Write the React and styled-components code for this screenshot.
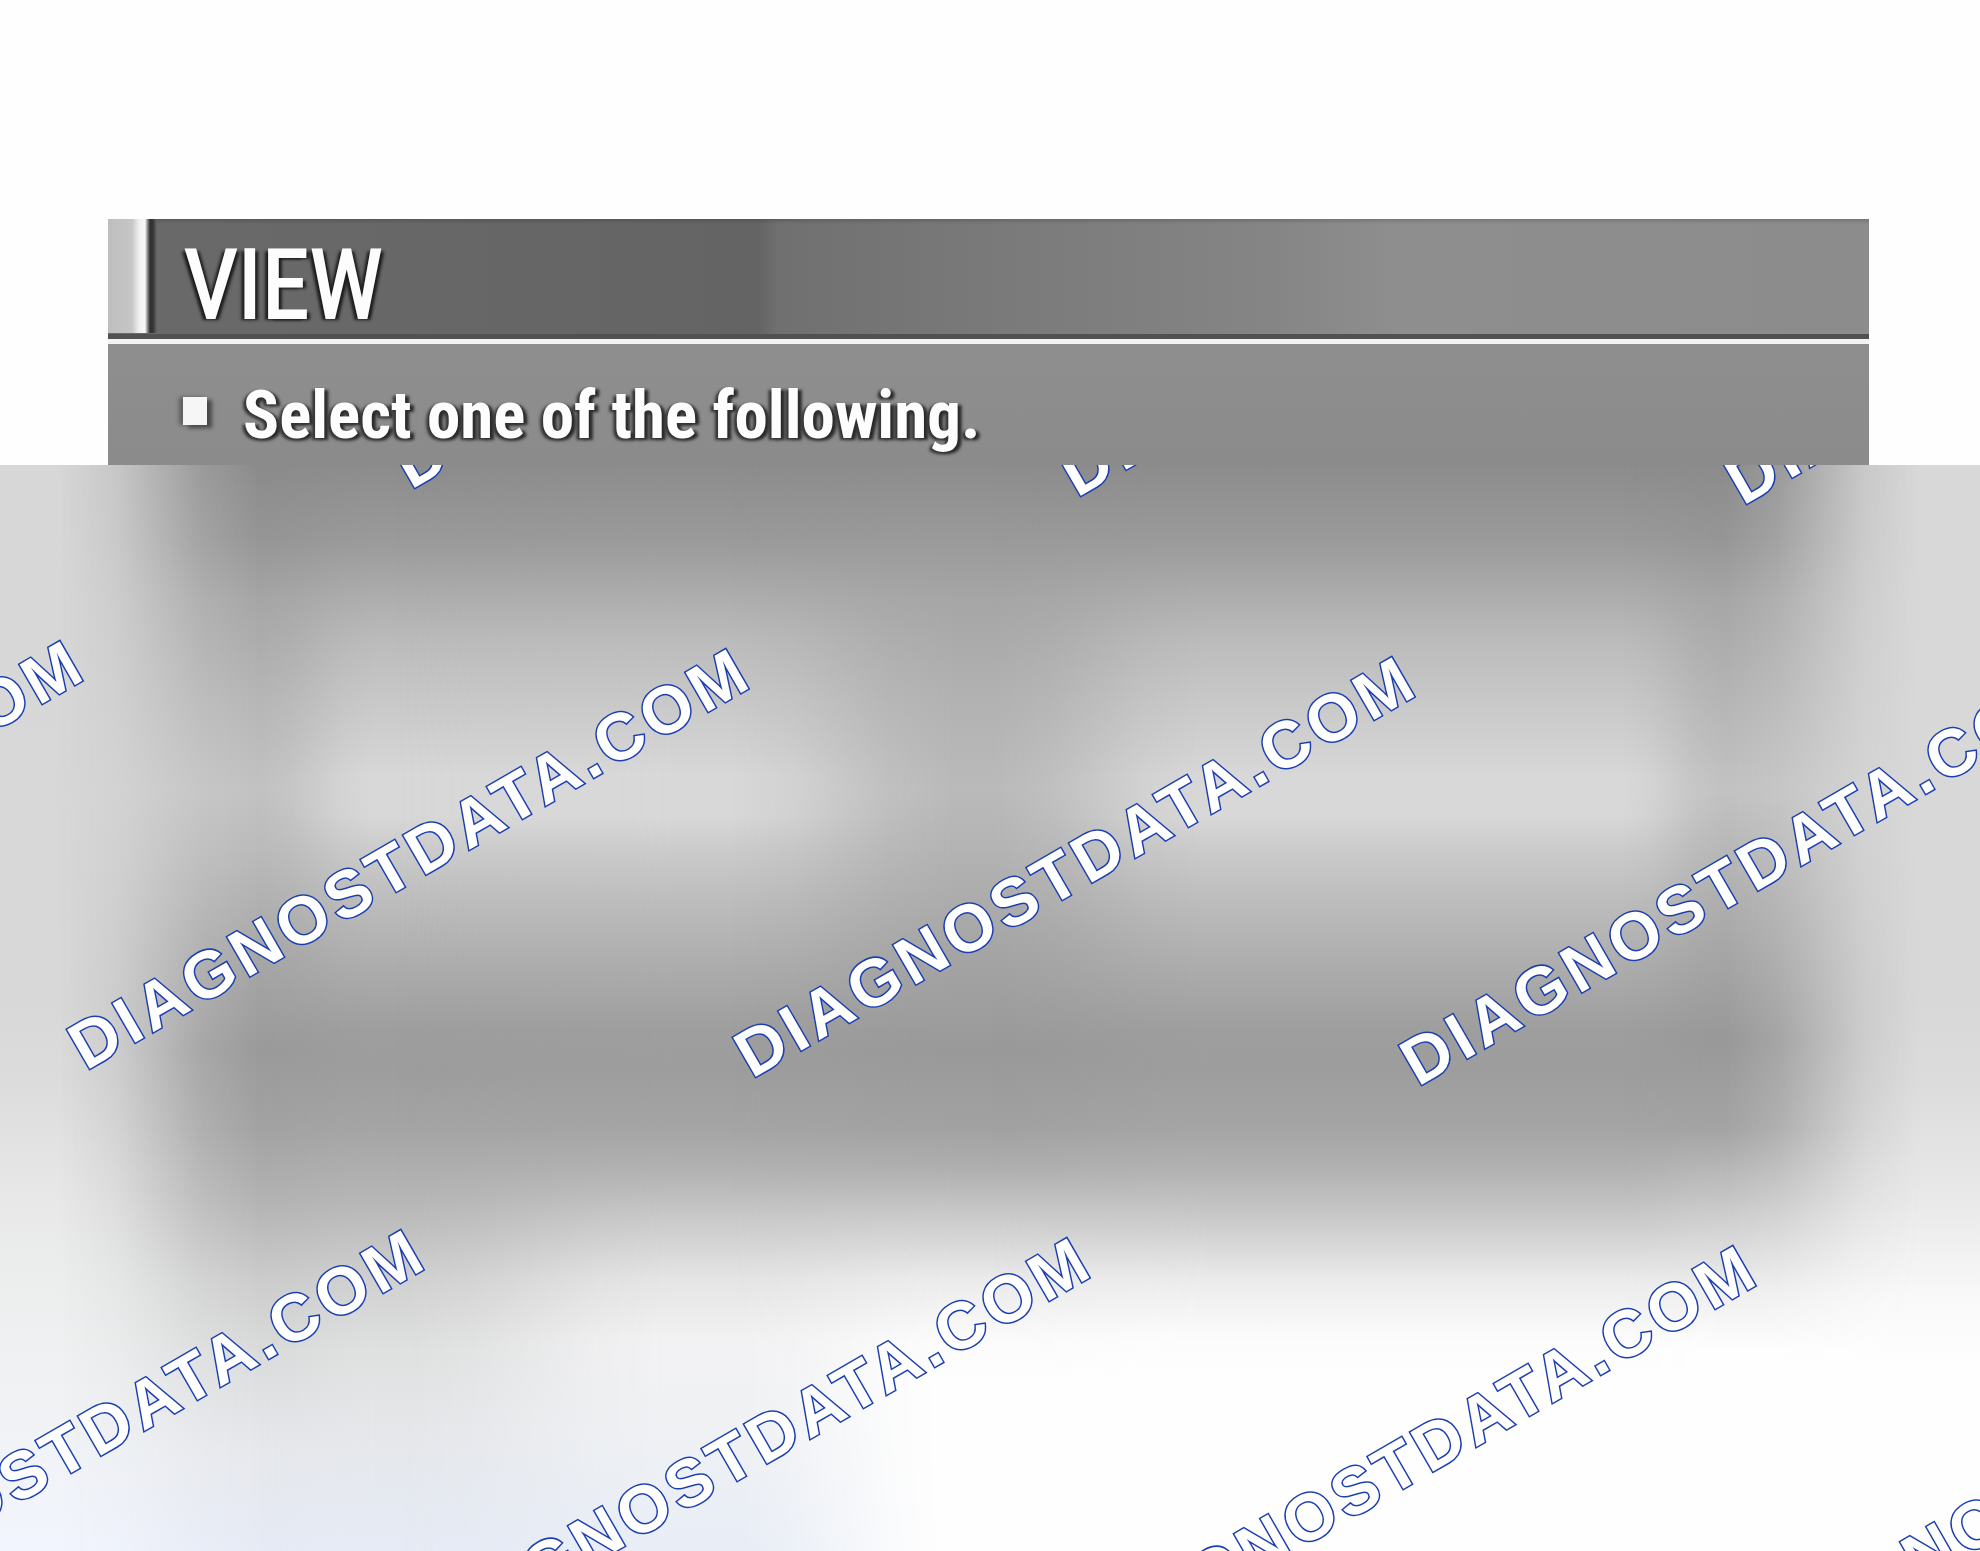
import React from "react";
import styled, { createGlobalStyle } from "styled-components";

const GlobalStyle = createGlobalStyle`
  *, *::before, *::after { box-sizing: border-box; }
  body { margin: 0; background: #fefefe; }
`;

const Page = styled.main`
  min-height: 100vh;
  display: flex;
  flex-direction: column;
  padding-top: 219px;
  overflow: hidden;
  font-family: "Roboto Condensed", Roboto, "Liberation Sans", Arial, sans-serif;
  color: #fdfdfd;
`;

const Screen = styled.section`
  margin: 0 111px 0 108px;
  background: linear-gradient(#929292, #8b8b8b);
`;

const TitleBar = styled.header`
  display: flex;
  height: 120px;
  border-bottom: 5px solid #515151;
  background:
    linear-gradient(#00000028, transparent 5px),
    linear-gradient(90deg, #6a6a6a 0, #646464 37%, #707070 38%, #7b7b7b 52%, #858585 66%, #8e8e8e 73%, #8c8c8c 100%);
`;

const Grip = styled.div`
  width: 49px;
  margin-bottom: 1px;
  background: linear-gradient(90deg, #bebebe 0, #c6c6c6 24px, #f0f0f0 31px, #f8f8f8 37px, #a0a0a0 39px, #303030 42px, #363636 45px, #686868 49px);
`;

const Title = styled.h1`
  margin: 0;
  padding: 16px 0 0 27px;
  font-size: 96px;
  line-height: 100px;
  font-weight: 400;
  -webkit-text-stroke: 2px #fdfdfd;
  text-shadow: -4px 2px 3px #1c1c1c, 4px 2px 3px #1c1c1c;
`;

const Prompt = styled.div`
  display: flex;
  align-items: flex-start;
  gap: 36px;
  height: 126px;
  padding: 35px 0 0 75px;
  border-top: 5px solid #f3f3f3;
`;

const Bullet = styled.span`
  width: 24px;
  height: 28px;
  margin-top: 18px;
  background: #f6f6f6;
  box-shadow: 5px 3px 4px #484848, -4px 0 4px #606060;
`;

const PromptText = styled.p`
  margin: 0;
  font-size: 67px;
  line-height: 72px;
  font-weight: 700;
  white-space: nowrap;
  text-shadow: -3px 2px 3px #333, 4px 2px 3px #2a2a2a;
`;

const Veil = styled.section`
  position: relative;
  flex: 1;
  min-height: 1086px;
  overflow: hidden;
  background: #fff;
`;

/* Each shade is a column of greys that fades in between two x positions. */
const Shade = styled.div`
  position: absolute;
  inset: 0;
  background: linear-gradient(${(p) => p.$stops});
  mask-image: ${(p) =>
    p.$to
      ? `linear-gradient(90deg, transparent ${p.$from}%, #0003 ${p.$from + (p.$to - p.$from) * 0.28}%, #000c ${p.$from + (p.$to - p.$from) * 0.72}%, #000 ${p.$to}%)`
      : "none"};
`;

const Stamp = styled.span`
  position: absolute;
  font: 700 66px/66px "Liberation Sans", Arial, sans-serif;
  letter-spacing: 5px;
  white-space: nowrap;
  color: #fff;
  -webkit-text-stroke: 3px #1c3fb0;
  paint-order: stroke fill;
  transform-origin: 0 56px;
  transform: rotate(-30deg);
`;

const stops = (list) => list.map(([y, c]) => `${c} ${y - 465}px`).join(", ");

const edge = [[465, "#d7d7d7"], [1000, "#d8d8d8"], [1080, "#dcdcdc"], [1200, "#e8e8e8"], [1300, "#edefef"], [1400, "#f0f2f4"], [1551, "#f2f5fd"]];
const side = [[465, "#8b8b8b"], [540, "#969696"], [600, "#a6a6a6"], [700, "#b6b6b6"], [790, "#c2c2c2"], [850, "#bababa"], [950, "#a8a8a8"], [1050, "#9a9a9a"], [1130, "#a3a3a3"], [1200, "#b3b3b3"], [1280, "#cccccc"], [1350, "#dadbdb"], [1450, "#e6e8ec"], [1551, "#e6ebf5"]];
const lobeTop = [[465, "#8c8c8c"], [540, "#9a9a9a"], [600, "#aeaeae"], [640, "#bbbbbb"], [700, "#c8c8c8"], [750, "#d2d2d2"], [775, "#d8d8d8"], [815, "#d8d8d8"], [850, "#cbcbcb"], [900, "#bdbdbd"], [960, "#aeaeae"], [1030, "#9e9e9e"], [1070, "#9d9d9d"], [1130, "#a5a5a5"]];
const lobeNear = [...lobeTop, [1200, "#b6b6b6"], [1280, "#d0d0d0"], [1350, "#dfe0e0"], [1430, "#e5e7ea"], [1551, "#e6ebf5"]];
const lobeLeft = [...lobeTop, [1170, "#b2b2b2"], [1220, "#cacaca"], [1280, "#e5e5e5"], [1340, "#f2f2f3"], [1430, "#eff1f4"], [1551, "#e8edf6"]];
const lobeRight = [...lobeTop, [1170, "#b2b2b2"], [1220, "#cacaca"], [1280, "#ebebeb"], [1340, "#fcfcfc"], [1380, "#fefefe"]];
const gap = [[465, "#8c8c8c"], [540, "#9a9a9a"], [600, "#a6a6a6"], [700, "#b2b2b2"], [790, "#bababa"], [850, "#b3b3b3"], [950, "#a5a5a5"], [1050, "#999999"], [1130, "#a2a2a2"], [1170, "#b0b0b0"], [1220, "#cccccc"], [1280, "#ebebeb"], [1340, "#fbfbfb"], [1380, "#fefefe"]];
const sideRight = [[465, "#8b8b8b"], [540, "#969696"], [600, "#a6a6a6"], [700, "#b5b5b5"], [790, "#c2c2c2"], [900, "#aeaeae"], [1040, "#989898"], [1130, "#a4a4a4"], [1220, "#cfcfcf"], [1290, "#eeeeee"], [1350, "#fefefe"]];
const edgeRight = [[465, "#d8d8d8"], [1000, "#d8d8d8"], [1080, "#dcdcdc"], [1200, "#e9e9e9"], [1300, "#f9f9f9"], [1370, "#fefefe"]];

const shades = [
  { list: edge },
  { from: 3, to: 13, list: side },
  { from: 13, to: 19, list: lobeNear },
  { from: 20, to: 34, list: lobeLeft },
  { from: 37, to: 48, list: gap },
  { from: 50, to: 61, list: lobeRight },
  { from: 82, to: 87, list: sideRight },
  { from: 87, to: 97, list: edgeRight },
];

/* Foot of the first letter of each stamp, on a slanted lattice. */
const rows = [
  { row: -1, cols: [0, 1, 2] },
  { row: 0, cols: [-1, 0, 1, 2] },
  { row: 1, cols: [0, 1, 2, 3] },
];
const stamps = rows.flatMap(({ row, cols }) =>
  cols.map((col) => ({ x: 86 + col * 666 - row * 325, y: 606 + col * 8 + row * 581 }))
);

export default function App() {
  return (
    <>
      <GlobalStyle />
      <Page>
        <Screen>
          <TitleBar>
            <Grip />
            <Title>VIEW</Title>
          </TitleBar>
          <Prompt>
            <Bullet />
            <PromptText>Select one of the following.</PromptText>
          </Prompt>
        </Screen>
        <Veil>
          {shades.map((s, i) => (
            <Shade key={i} $from={s.from} $to={s.to} $stops={stops(s.list)} />
          ))}
          {stamps.map((s) => (
            <Stamp key={`${s.x}-${s.y}`} style={{ left: s.x, top: s.y - 56 }}>
              DIAGNOSTDATA.COM
            </Stamp>
          ))}
        </Veil>
      </Page>
    </>
  );
}
